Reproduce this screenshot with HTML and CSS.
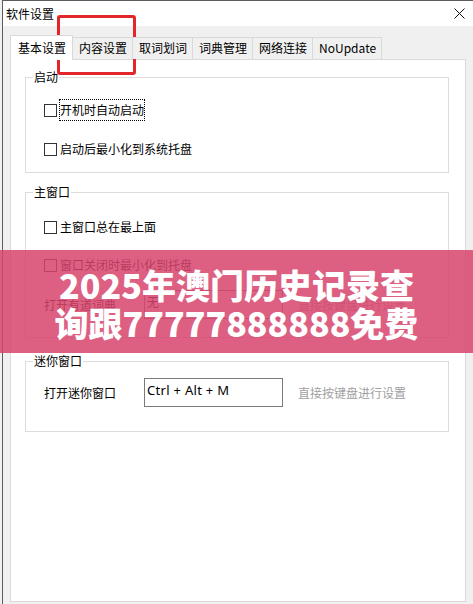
FILE: index.html
```html
<!DOCTYPE html>
<html lang="zh-CN">
<head>
<meta charset="utf-8">
<title>软件设置</title>
<link rel="stylesheet" href="styles.css">
</head>
<body>
<div class="window">
  <div class="titlebar">
    <span class="title">软件设置</span>
    <svg class="close" width="11" height="11" viewBox="0 0 11 11"><path d="M0.5 0.5 L10.5 10.5 M10.5 0.5 L0.5 10.5" stroke="#111" stroke-width="1" fill="none"/></svg>
  </div>
  <div class="content">
    <div class="tabs">
      <div class="tab active">基本设置</div>
      <div class="tab">内容设置</div>
      <div class="tab">取词划词</div>
      <div class="tab">词典管理</div>
      <div class="tab">网络连接</div>
      <div class="tab last">NoUpdate</div>
    </div>
    <div class="panel">
      <fieldset class="group g1">
        <legend>启动</legend>
        <div class="gbody">
          <div class="check-row"><span class="box"></span><span class="label focus">开机时自动启动</span></div>
          <div class="check-row r2"><span class="box"></span><span class="label">启动后最小化到系统托盘</span></div>
        </div>
      </fieldset>
      <fieldset class="group g2">
        <legend>主窗口</legend>
        <div class="gbody">
          <div class="check-row"><span class="box"></span><span class="label">主窗口总在最上面</span></div>
          <div class="check-row r2b"><span class="box"></span><span class="label">窗口关闭时最小化到托盘</span></div>
          <div class="input-row">
            <span class="field-label">打开有道词典</span>
            <span class="input">无</span>
            <span class="hint">直接按键盘进行设置</span>
          </div>
        </div>
      </fieldset>
      <fieldset class="group g3">
        <legend>迷你窗口</legend>
        <div class="gbody">
          <div class="input-row first">
            <span class="field-label">打开迷你窗口</span>
            <span class="input latin">Ctrl + Alt + M</span>
            <span class="hint">直接按键盘进行设置</span>
          </div>
        </div>
      </fieldset>
    </div>
  </div>
</div>
<div class="mark"></div>
<div class="banner">
  <div class="banner-line">2025年澳门历史记录查</div>
  <div class="banner-line">询跟77777888888免费</div>
</div>
</body>
</html>
```
FILE: styles.css
```css
html, body {
  margin: 0;
  padding: 0;
}
body {
  width: 473px;
  height: 604px;
  overflow: hidden;
  position: relative;
  background: #f0f0f0;
  font-family: "Noto Sans CJK SC", "Noto Sans", sans-serif;
  font-size: 12px;
  color: #000;
}
.window {
  margin-left: 2px;
  border-left: 1px solid #5c5c5c;
  border-top: 1px solid #5c5c5c;
  height: 603px;
  display: flex;
  flex-direction: column;
}
.titlebar {
  height: 25px;
  background: #fff;
  display: flex;
  align-items: center;
  justify-content: space-between;
  padding: 0 8px 0 3px;
  flex-shrink: 0;
}
.title {
  line-height: 16px;
}
.close {
  display: block;
}
.content {
  padding: 9px 7px 0 7px;
}
.tabs {
  display: flex;
  align-items: flex-end;
  height: 25px;
  position: relative;
  z-index: 1;
}
.tab {
  height: 22px;
  box-sizing: border-box;
  margin-bottom: 1px;
  padding: 0 5px 0 6px;
  border-top: 1px solid #d9d9d9;
  border-left: 1px solid #d9d9d9;
  background: #f0f0f0;
  line-height: 20px;
  white-space: nowrap;
}
.tab.last {
  border-right: 1px solid #d9d9d9;
}
.tab.active {
  height: 25px;
  margin-bottom: 0;
  padding: 0 6px 0 7px;
  background: #fff;
  border-right: 1px solid #d9d9d9;
  line-height: 24px;
}
.tab.active + .tab {
  border-left: none;
}
.panel {
  margin-top: -1px;
  height: 543px;
  box-sizing: border-box;
  background: #fff;
  border: 1px solid #d9d9d9;
  padding: 9px 16px 0 14px;
}
.group {
  margin: 0;
  padding: 0;
  min-width: 0;
  border: 1px solid #dcdcdc;
}
.group legend {
  margin-left: 7px;
  padding: 0 1px;
  line-height: 16px;
  font-size: 12px;
}
.gbody {
  padding-left: 18px;
}
.g1 .gbody {
  padding-top: 14px;
  padding-bottom: 12px;
}
.g2 {
  margin-top: 11px;
}
.g2 .gbody {
  padding-top: 16px;
  padding-bottom: 18px;
}
.g3 {
  margin-top: 15px;
}
.g3 .gbody {
  padding-top: 9px;
  padding-bottom: 24px;
}
.check-row {
  display: flex;
  align-items: center;
  height: 22px;
}
.check-row.r2 {
  margin-top: 17px;
}
.check-row.r2b {
  margin-top: 16px;
}
.box {
  width: 13px;
  height: 13px;
  box-sizing: border-box;
  border: 1px solid #333;
  background: #fff;
  margin-right: 2px;
  flex-shrink: 0;
}
.label {
  border: 1px dotted transparent;
  line-height: 20px;
  white-space: nowrap;
}
.label.focus {
  border-color: #000;
}
.input-row {
  display: flex;
  align-items: center;
  margin-top: 14px;
}
.input-row.first {
  margin-top: 0;
}
.field-label {
  width: 100px;
  flex-shrink: 0;
}
.input {
  width: 139px;
  height: 29px;
  box-sizing: border-box;
  border: 1px solid #7a7a7a;
  padding: 2px 2px 0 2px;
  line-height: 18px;
  flex-shrink: 0;
  background: #fff;
  white-space: nowrap;
}
.input.latin {
  font-family: "Noto Sans", sans-serif;
  font-size: 13px;
  letter-spacing: 0.3px;
}
.hint {
  margin-left: 15px;
  color: #a0a0a0;
  white-space: nowrap;
}
.mark {
  position: absolute;
  left: 57px;
  top: 15px;
  width: 79px;
  height: 60px;
  box-sizing: border-box;
  border: 3px solid #e3262a;
  border-radius: 3px;
}
.banner {
  position: absolute;
  left: 0;
  top: 250px;
  width: 473px;
  height: 103px;
  box-sizing: border-box;
  padding-top: 16px;
  background: rgba(215, 68, 108, 0.85);
  color: #fff;
  text-align: center;
  font-family: "Noto Sans CJK SC", sans-serif;
  font-weight: 900;
  font-size: 34px;
  line-height: 38px;
}
.banner-line {
  white-space: nowrap;
}
```
